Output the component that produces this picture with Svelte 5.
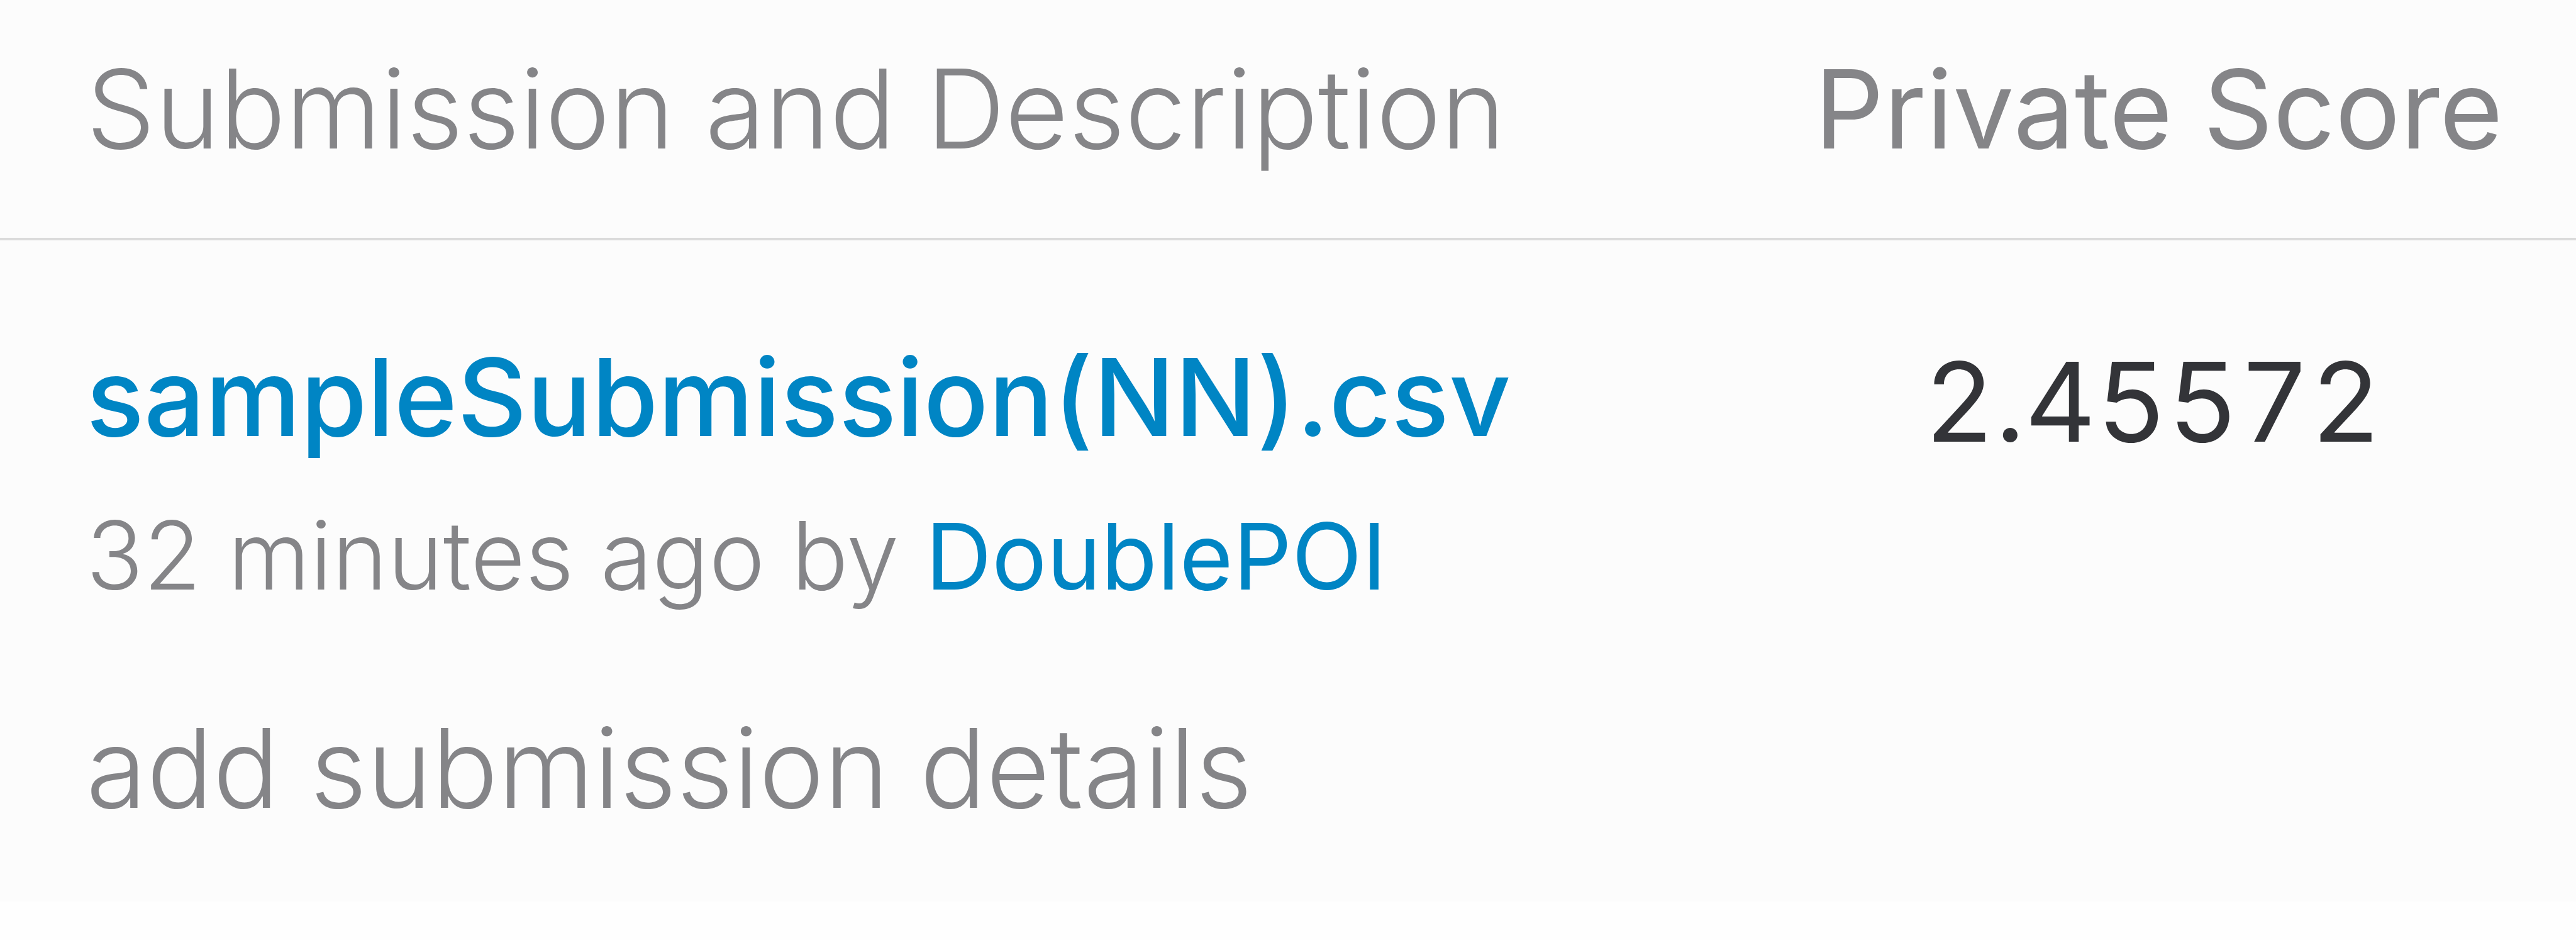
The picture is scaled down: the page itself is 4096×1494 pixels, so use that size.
<script>
  const submission = {
    file: 'sampleSubmission(NN).csv',
    age: '32 minutes ago by',
    author: 'DoublePOI',
    score: '2.45572'
  };
</script>

<main>
  <table>
    <thead>
      <tr><th class="description">Submission and Description</th><th class="score">Private Score</th></tr>
    </thead>
    <tbody>
      <tr>
        <td class="description">
          <a class="file" href="#file">{submission.file}</a>
          <p>{submission.age} <a href="#author">{submission.author}</a></p>
          <button type="button">add submission details</button>
        </td>
        <td class="score">{submission.score}</td>
      </tr>
    </tbody>
  </table>
</main>

<style>
  :global(body) { margin: 0; background: #fefefe; }
  main { font-family: Inter, sans-serif; color: #858588; background: #fcfcfc; }
  table { width: 100%; border-collapse: separate; border-spacing: 0; table-layout: fixed; }
  th, td { text-align: left; vertical-align: top; }
  th { height: 382px; box-sizing: border-box; padding: 67px 0 0 137px; border-bottom: 4px solid #dbdbdb; font-size: 174px; line-height: 212px; font-weight: 300; }
  td { padding: 143px 0 107px 137px; }
  th.score { width: 1211px; box-sizing: border-box; padding-left: 0; font-size: 173px; font-weight: 400; }
  td.score { padding: 150px 0 0 174px; font-size: 175px; line-height: 212px; font-variant-numeric: tabular-nums; color: #333438; }
  .file { display: block; width: max-content; font-size: 171px; line-height: 212px; font-weight: 500; }
  p { margin: 54px 0 138px; font-size: 150px; line-height: 184px; font-weight: 300; }
  a { color: #0085c4; text-decoration: none; }
  p a { font-size: 146px; font-weight: 400; }
  button { display: block; padding: 0; border: 0; background: none; color: inherit; font: 300 175px/212px Inter, sans-serif; }
</style>
